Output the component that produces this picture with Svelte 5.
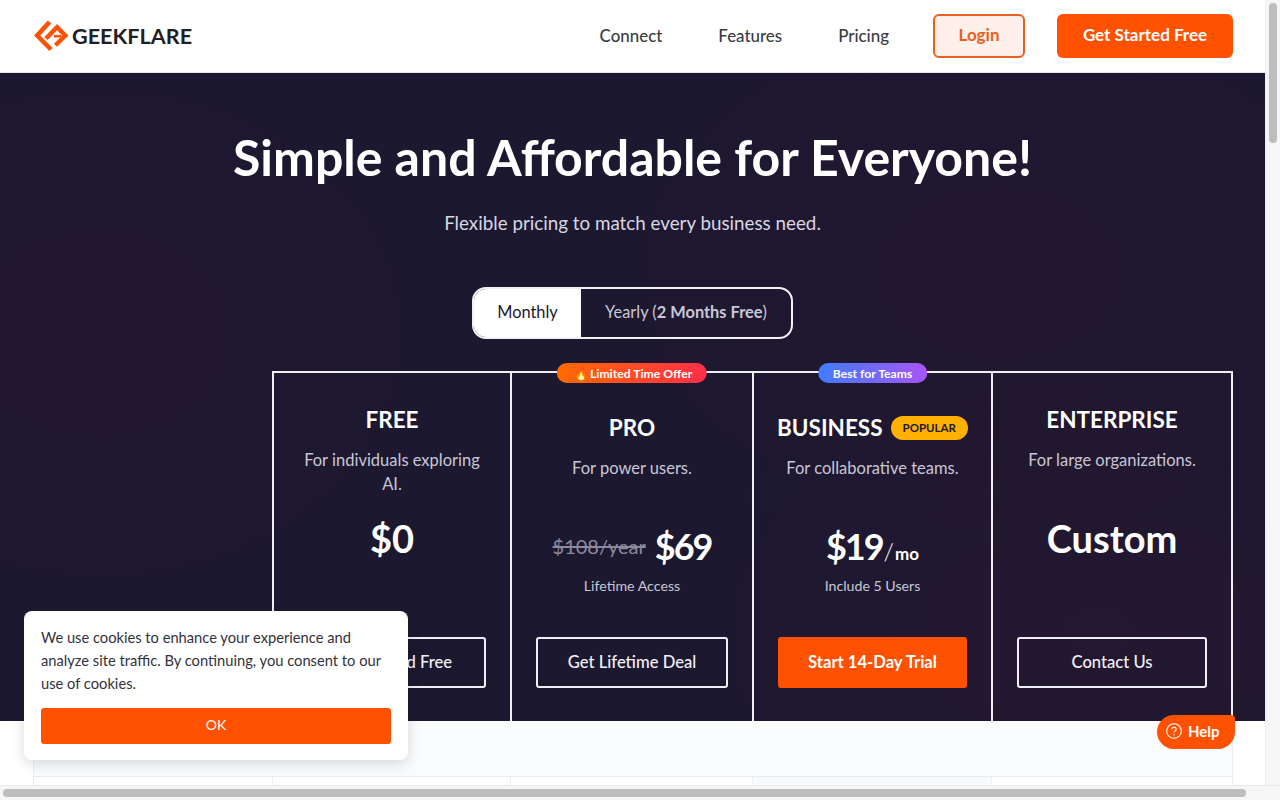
<script>
  const plans = [
    { name: 'FREE', desc: 'For individuals exploring AI.', price: '$0', cta: 'Get Started Free' },
    { name: 'PRO', desc: 'For power users.', old: '$108/year', price: '$69', tight: true, note: 'Lifetime Access', cta: 'Get Lifetime Deal', badge: 'Limited Time Offer', badgeClass: 'hot', fire: true, offset: true },
    { name: 'BUSINESS', tag: 'POPULAR', desc: 'For collaborative teams.', price: '$19', tight: true, per: '/', mo: 'mo', note: 'Include 5 Users', cta: 'Start 14-Day Trial', badge: 'Best for Teams', badgeClass: 'team', primary: true, offset: true },
    { name: 'ENTERPRISE', desc: 'For large organizations.', price: 'Custom', cta: 'Contact Us' }
  ];
</script>

<div class="viewport">
  <div class="page">
    <header class="nav">
      <a class="logo" href="#top">
        <svg width="34" height="34" viewBox="0 0 34 34" aria-hidden="true">
          <path d="M15.5 3 L3.2 16.5 L17 30.5" fill="none" stroke="#ff5100" stroke-width="4.6"/>
          <path d="M12 19.5 L23 8.2 L31.3 16.5 L21.5 26.2" fill="none" stroke="#ff5100" stroke-width="4.4"/>
          <path d="M20 17.2 L27 17.2" fill="none" stroke="#ff5100" stroke-width="2.6"/>
        </svg>
        <span>GEEKFLARE</span>
      </a>
      <nav class="links">
        <a href="#connect">Connect</a>
        <a href="#features">Features</a>
        <a href="#pricing">Pricing</a>
      </nav>
      <button class="login">Login</button>
      <button class="start">Get Started Free</button>
    </header>

    <section class="hero">
      <h1>Simple and Affordable for Everyone!</h1>
      <p class="lead">Flexible pricing to match every business need.</p>
      <div class="toggle">
        <span class="on">Monthly</span>
        <span class="off">Yearly (<b>2 Months Free</b>)</span>
      </div>
      <div class="grid">
        <div class="spacer"></div>
        {#each plans as p}
          <article class="card" class:offset={p.offset}>
            {#if p.badge}
              <span class="badge {p.badgeClass}">{#if p.fire}<span class="fire">🔥</span>{/if}{p.badge}</span>
            {/if}
            <h2>{p.name}{#if p.tag}<span class="tag">{p.tag}</span>{/if}</h2>
            <p class="desc">{p.desc}</p>
            <div class="price">
              {#if p.old}<s>{p.old}</s>{/if}
              <strong class:tight={p.tight}>{p.price}</strong>
              {#if p.per}<span class="per"><i>{p.per}</i>{p.mo}</span>{/if}
            </div>
            <p class="note">{p.note ?? ''}</p>
            <button class="cta" class:primary={p.primary}>{p.cta}</button>
          </article>
        {/each}
      </div>
    </section>

    <section class="below">
      <div class="table-head"></div>
      <div class="table-row">
        <div></div><div></div><div></div><div class="shade"></div><div></div>
      </div>
    </section>
  </div>

  <div class="cookie">
    <p>We use cookies to enhance your experience and analyze site traffic. By continuing, you consent to our use of cookies.</p>
    <button>OK</button>
  </div>

  <button class="help">
    <svg width="16" height="16" viewBox="0 0 16 16" aria-hidden="true">
      <circle cx="8" cy="8" r="7.3" fill="none" stroke="#fff" stroke-width="1.1"/>
      <path d="M5.9 6.2a2.1 2.1 0 1 1 3.3 1.7c-.8.5-1.2.9-1.2 1.7" fill="none" stroke="#fff" stroke-width="1.2"/>
      <circle cx="8" cy="11.7" r=".75" fill="#fff"/>
    </svg>
    Help
  </button>

  <div class="vbar"><div></div></div>
  <div class="hbar"><div></div></div>
</div>

<style>
  :global(body) { margin: 0; background: #fff; }
  .viewport {
    position: relative;
    width: 1280px;
    height: 800px;
    overflow: hidden;
    font-family: Lato, "Noto Sans", sans-serif;
    color: #fff;
  }
  .page { width: 1265px; height: 785px; overflow: hidden; display: flex; flex-direction: column; background: #fff; }
  button { font-family: inherit; cursor: pointer; }
  a { text-decoration: none; color: inherit; }

  .nav {
    flex: none;
    height: 72px;
    display: flex;
    align-items: center;
    padding: 0 32px 0 34px;
    border-bottom: 1px solid #e6e4ee;
    color: #3b3b44;
  }
  .logo { display: flex; align-items: center; gap: 4px; font-weight: 700; font-size: 21.6px; color: #1f1f24; margin-right: auto; }
  .logo svg { display: block; }
  .links { display: flex; gap: 56px; font-size: 16.9px; font-weight: 500; margin-right: 44px; padding-bottom: 2px; }
  .login, .start { height: 44px; border-radius: 6px; font-size: 17px; font-weight: 700; padding: 0 0 3px; }
  .login { width: 92px; background: #fff1e9; border: 2px solid #e8601f; color: #e8601f; margin-right: 32px; }
  .start { width: 176px; background: #ff5100; border: 0; color: #fff; }

  .hero {
    flex: none;
    height: 648px;
    box-sizing: border-box;
    padding: 55px 32px 0;
    text-align: center;
    background:
      radial-gradient(600px 420px at 1000px 200px, rgba(70,20,50,.16), transparent 70%),
      radial-gradient(500px 400px at 100px 260px, rgba(70,20,50,.18), transparent 70%),
      radial-gradient(600px 400px at 1100px 560px, rgba(70,20,50,.2), transparent 70%),
      #1c1830;
    display: flex;
    flex-direction: column;
    align-items: center;
  }
  h1 { margin: 0; font-size: 50px; line-height: 58px; font-weight: 700; white-space: nowrap; }
  .lead { margin: 23px 0 0; font-size: 18.8px; line-height: 28px; color: #d9d7e3; }
  .toggle {
    margin-top: 50px;
    width: 321px;
    height: 52px;
    box-sizing: border-box;
    border: 2px solid #f2f1f6;
    border-radius: 14px;
    overflow: hidden;
    display: flex;
    font-size: 16.4px;
  }
  .toggle span { display: flex; align-items: center; justify-content: center; padding-bottom: 3px; }
  .on { width: 107px; background: #fff; color: #1c1830; }
  .off { flex: 1; color: #c9c7d6; white-space: pre; }
  .off b { font-weight: 700; }

  .grid {
    margin-top: 32px;
    width: 1201px;
    flex: 1;
    display: grid;
    grid-template-columns: 240px 238px 242px 239px 242px;
  }
  .card {
    position: relative;
    box-sizing: border-box;
    border: solid #f0eff5;
    border-width: 2px 0 0 2px;
    padding: 33px 24px 33px;
    display: flex;
    flex-direction: column;
    align-items: center;
  }
  .card:last-child { border-right: 2px solid #f0eff5; }
  .card.offset { padding-top: 41px; }
  h2 { margin: 0; font-size: 22.5px; line-height: 28px; font-weight: 700; display: flex; align-items: center; white-space: nowrap; }
  .tag {
    margin-left: 8px;
    padding: 0 12px;
    height: 24px;
    border-radius: 12px;
    background: #ffb000;
    color: #1c1830;
    font-size: 11.5px;
    font-weight: 700;
    display: flex;
    align-items: center;
  }
  .desc { margin: 14px 0 0; min-height: 48px; font-size: 16.5px; line-height: 24px; color: #c9c7d6; }
  .price { margin-top: 17px; height: 50px; display: flex; align-items: center; justify-content: center; gap: 9px; white-space: nowrap; }
  .price strong { font-size: 38px; line-height: 50px; font-weight: 700; }
  .price strong.tight { font-size: 36px; letter-spacing: -2px; }
  .price s { font-size: 20px; color: #8b899b; }
  .per { font-size: 17px; font-weight: 700; margin-left: -8px; padding-top: 8px; display: flex; align-items: baseline; gap: 1px; }
  .per i { font-style: normal; font-size: 24px; font-weight: 300; }
  .note { margin: 5px 0 0; font-size: 14.2px; line-height: 20px; color: #c9c7d6; }
  .cta {
    margin-top: auto;
    width: 100%;
    height: 51px;
    flex: none;
    padding: 0 0 2px;
    border: 2px solid #f0eff5;
    border-radius: 3px;
    background: transparent;
    color: #f3f2f7;
    font-size: 16.6px;
    font-weight: 500;
  }
  .cta.primary { background: #ff5100; border-color: #ff5100; color: #fff; font-weight: 700; }

  .badge {
    position: absolute;
    top: -10px;
    left: 50%;
    transform: translateX(-50%);
    height: 20px;
    padding: 0 15px;
    border-radius: 10px;
    display: flex;
    align-items: center;
    font-size: 12.2px;
    font-weight: 700;
    white-space: nowrap;
  }
  .hot { background: linear-gradient(90deg, #ff6a00, #ff2e4a); }
  .team { background: linear-gradient(90deg, #3f7cff, #a855f7); }
  .fire { font-size: 13px; margin-left: 2px; font-family: "Noto Color Emoji", sans-serif; }

  .below { flex: 1; background: #fff; padding: 0 32px; display: flex; flex-direction: column; align-items: flex-end; }
  .table-head { width: 1200px; height: 56px; flex: none; background: #fafbfd; border-left: 1px solid #eceef1; border-right: 1px solid #eceef1; border-bottom: 1px solid #e9ebee; box-sizing: border-box; }
  .table-row { width: 1200px; flex: 1; box-sizing: border-box; display: grid; grid-template-columns: 238px 238px 242px 239px 241px; background: #fff; border-left: 1px solid #e9ebee; border-right: 1px solid #e9ebee; }
  .table-row div + div { border-left: 1px solid #eceef1; }
  .table-row .shade { background: #f8f9fb; }

  .cookie {
    position: absolute;
    left: 24px;
    top: 611px;
    width: 384px;
    height: 149px;
    box-sizing: border-box;
    padding: 15px 17px 16px;
    background: #fff;
    border-radius: 8px;
    box-shadow: 0 4px 14px rgba(0,0,0,.14);
    color: #33333b;
    display: flex;
    flex-direction: column;
  }
  .cookie p { margin: 0; font-size: 14.7px; line-height: 23px; }
  .cookie button { margin-top: auto; height: 36px; padding: 0 0 3px; border: 0; border-radius: 3px; background: #ff5100; color: #fff; font-size: 14px; }

  .help {
    position: absolute;
    left: 1157px;
    top: 715px;
    width: 78px;
    height: 34px;
    padding: 0 0 2px 9px;
    border: 0;
    border-radius: 17px 4px 17px 17px;
    background: #ff5100;
    color: #fff;
    font-size: 15px;
    font-weight: 700;
    display: flex;
    align-items: center;
    gap: 6px;
  }

  .vbar { position: absolute; right: 0; top: 0; width: 15px; height: 785px; background: #f6f6f6; border-left: 1px solid #eee; box-sizing: border-box; }
  .vbar div { position: absolute; left: 3px; top: 3px; width: 8px; height: 140px; border-radius: 4px; background: #bdbdbd; }
  .hbar { position: absolute; left: 0; bottom: 0; width: 1280px; height: 15px; background: #f6f6f6; border-top: 1px solid #e8e8e8; box-sizing: border-box; }
  .hbar div { position: absolute; left: 3px; top: 3px; width: 1243px; height: 8px; border-radius: 4px; background: #bdbdbd; }
</style>
